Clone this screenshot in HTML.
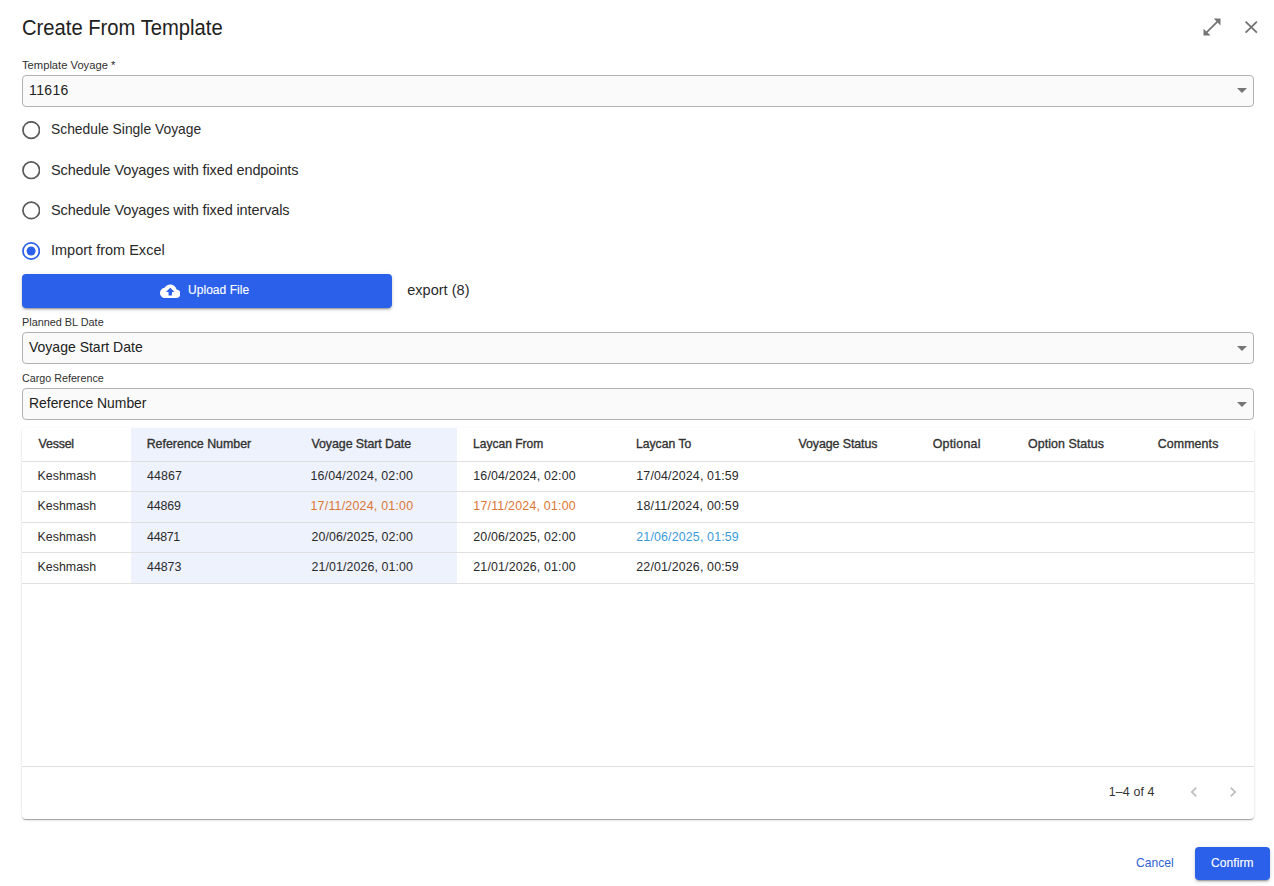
<!DOCTYPE html>
<html><head><meta charset="utf-8">
<style>
*{box-sizing:border-box;margin:0;padding:0}
html,body{width:1274px;height:886px;overflow:hidden;background:#fff;font-family:"Liberation Sans",sans-serif;color:#222}
.a{position:absolute}
.t{position:absolute;white-space:nowrap;line-height:20px}
.sel{position:absolute;left:22px;width:1232px;height:32px;border:1px solid #b2b2b2;border-radius:4px;background:#fafafa}
.hl{position:absolute;left:0;width:1232px;height:1px;background:#e0e0e0}
</style></head><body>
<!-- header icons -->
<svg class="a" style="left:1195px;top:10px" width="70" height="35" viewBox="0 0 70 35">
  <path fill="#757575" d="M18.7 8.5H25.5V15.4Z M8.5 18.7V25.5H15.6Z"/>
  <path stroke="#757575" stroke-width="1.85" d="M23.2 10.8L10.8 23.2"/>
  <path stroke="#757575" stroke-width="1.9" d="M50.6 11.6L61.9 22.6M61.9 11.6L50.6 22.6"/>
</svg>

<div class="sel" style="top:75px"></div>
<div class="sel" style="top:332px"></div>
<div class="sel" style="top:388px"></div>
<svg class="a" style="left:1237px;top:88px" width="10" height="5" viewBox="0 0 10 5"><path fill="#757575" d="M0 0H10L5 5Z"/></svg>
<svg class="a" style="left:1237px;top:346px" width="10" height="5" viewBox="0 0 10 5"><path fill="#757575" d="M0 0H10L5 5Z"/></svg>
<svg class="a" style="left:1237px;top:402px" width="10" height="5" viewBox="0 0 10 5"><path fill="#757575" d="M0 0H10L5 5Z"/></svg>

<!-- radios -->
<svg class="a" style="left:22px;top:121px" width="18" height="140" viewBox="0 0 18 140">
  <g fill="none" stroke="#5a5a5a" stroke-width="1.7">
    <circle cx="9.25" cy="9.1" r="8.3"/>
    <circle cx="9.25" cy="49.2" r="8.3"/>
    <circle cx="9.25" cy="89.4" r="8.3"/>
  </g>
  <circle cx="9.15" cy="130" r="8.15" fill="none" stroke="#2a60ea" stroke-width="1.7"/>
  <circle cx="9.1" cy="130" r="4.5" fill="#2a60ea"/>
</svg>

<!-- upload button -->
<div class="a" style="left:22px;top:274px;width:370px;height:34px;background:#2a60ea;border-radius:4px;box-shadow:0 3px 1px -2px rgba(0,0,0,.2),0 2px 2px 0 rgba(0,0,0,.14),0 1px 5px 0 rgba(0,0,0,.12)"></div>
<svg class="a" style="left:159.7px;top:280.7px" width="20.5" height="20.5" viewBox="0 0 24 24"><path fill="#fff" d="M19.35 10.04C18.67 6.59 15.64 4 12 4 9.11 4 6.6 5.64 5.35 8.04 2.34 8.36 0 10.91 0 14c0 3.31 2.69 6 6 6h13c2.76 0 5-2.24 5-5 0-2.64-2.05-4.78-4.65-4.96zM14 13v4h-4v-4H7l5-5 5 5h-3z"/></svg>

<!-- table paper -->
<div class="a" style="left:22px;top:428px;width:1232px;height:391px;background:#fff;border-radius:4px;box-shadow:0 2px 1px -1px rgba(0,0,0,.2),0 1px 1px 0 rgba(0,0,0,.14),0 1px 3px 0 rgba(0,0,0,.12)">
  <div class="a" style="left:109px;top:0;width:326px;height:155px;background:#eef2fd"></div>
  <div class="hl" style="top:33px"></div>
  <div class="hl" style="top:63px"></div>
  <div class="hl" style="top:94px"></div>
  <div class="hl" style="top:124px"></div>
  <div class="hl" style="top:155px"></div>
  <div class="hl" style="top:338px"></div>
</div>
<svg class="a" style="left:1184px;top:782px" width="20" height="20" viewBox="0 0 24 24"><path fill="#bdbdbd" d="M15.41 7.41 14 6l-6 6 6 6 1.41-1.41L10.83 12z"/></svg>
<svg class="a" style="left:1223px;top:782px" width="20" height="20" viewBox="0 0 24 24"><path fill="#bdbdbd" d="M10 6 8.59 7.41 13.17 12l-4.58 4.59L10 18l6-6z"/></svg>

<!-- confirm button -->
<div class="a" style="left:1195px;top:847px;width:75px;height:33px;background:#2a60ea;border-radius:4px;box-shadow:0 3px 1px -2px rgba(0,0,0,.2),0 2px 2px 0 rgba(0,0,0,.14),0 1px 5px 0 rgba(0,0,0,.12)"></div>

<div id="title" class="t" style="left:22.10px;top:17.80px;font-size:22.00px;color:#212121;letter-spacing:0.000px;transform:scaleX(0.9186);transform-origin:0 0">Create From Template</div>
<div id="l_tv" class="t" style="left:21.50px;top:54.80px;font-size:11.80px;color:#303030;letter-spacing:0.000px;transform:scaleX(0.9490);transform-origin:0 0">Template Voyage *</div>
<div id="v_tv" class="t" style="left:29.10px;top:80.00px;font-size:14.00px;color:#212121;letter-spacing:0.350px">11616</div>
<div id="r1" class="t" style="left:51.00px;top:119.00px;font-size:14.50px;color:#2a2a2a;letter-spacing:0.000px;transform:scaleX(0.9552);transform-origin:0 0">Schedule Single Voyage</div>
<div id="r2" class="t" style="left:51.00px;top:160.01px;font-size:14.50px;color:#2a2a2a;letter-spacing:-0.111px">Schedule Voyages with fixed endpoints</div>
<div id="r3" class="t" style="left:51.00px;top:200.01px;font-size:14.50px;color:#2a2a2a;letter-spacing:-0.111px">Schedule Voyages with fixed intervals</div>
<div id="r4" class="t" style="left:51.00px;top:240.00px;font-size:14.50px;color:#2a2a2a;letter-spacing:0.004px">Import from Excel</div>
<div id="up" class="t" style="left:188.00px;top:279.71px;font-size:12.00px;color:#ffffff;letter-spacing:0.040px;-webkit-text-stroke:0.12px #ffffff">Upload File</div>
<div id="exp" class="t" style="left:407.20px;top:279.80px;font-size:14.50px;color:#2a2a2a;letter-spacing:0.025px">export (8)</div>
<div id="l_bl" class="t" style="left:22.20px;top:312.10px;font-size:11.80px;color:#303030;letter-spacing:0.000px;transform:scaleX(0.9202);transform-origin:0 0">Planned BL Date</div>
<div id="v_bl" class="t" style="left:28.80px;top:336.90px;font-size:14.50px;color:#212121;letter-spacing:0.000px;transform:scaleX(0.9662);transform-origin:0 0">Voyage Start Date</div>
<div id="l_cr" class="t" style="left:22.40px;top:368.10px;font-size:11.80px;color:#303030;letter-spacing:0.000px;transform:scaleX(0.9096);transform-origin:0 0">Cargo Reference</div>
<div id="v_cr" class="t" style="left:29.30px;top:392.80px;font-size:14.50px;color:#212121;letter-spacing:0.000px;transform:scaleX(0.9590);transform-origin:0 0">Reference Number</div>
<div id="h1" class="t" style="left:38.60px;top:434.00px;font-size:12.40px;color:#333333;letter-spacing:-0.200px;-webkit-text-stroke:0.35px #333333">Vessel</div>
<div id="h2" class="t" style="left:146.70px;top:434.00px;font-size:12.40px;color:#333333;letter-spacing:-0.014px;-webkit-text-stroke:0.35px #333333">Reference Number</div>
<div id="h3" class="t" style="left:311.50px;top:434.00px;font-size:12.40px;color:#333333;letter-spacing:-0.063px;-webkit-text-stroke:0.35px #333333">Voyage Start Date</div>
<div id="h4" class="t" style="left:473.20px;top:434.00px;font-size:12.40px;color:#333333;letter-spacing:0.000px;-webkit-text-stroke:0.35px #333333;transform:scaleX(0.9721);transform-origin:0 0">Laycan From</div>
<div id="h5" class="t" style="left:635.80px;top:434.00px;font-size:12.40px;color:#333333;letter-spacing:0.000px;-webkit-text-stroke:0.35px #333333;transform:scaleX(0.9823);transform-origin:0 0">Laycan To</div>
<div id="h6" class="t" style="left:798.50px;top:434.00px;font-size:12.40px;color:#333333;letter-spacing:-0.083px;-webkit-text-stroke:0.35px #333333">Voyage Status</div>
<div id="h7" class="t" style="left:932.70px;top:434.00px;font-size:12.40px;color:#333333;letter-spacing:0.227px;-webkit-text-stroke:0.35px #333333">Optional</div>
<div id="h8" class="t" style="left:1028.00px;top:434.00px;font-size:12.40px;color:#333333;letter-spacing:0.065px;-webkit-text-stroke:0.35px #333333">Option Status</div>
<div id="h9" class="t" style="left:1157.70px;top:434.00px;font-size:12.40px;color:#333333;letter-spacing:0.107px;-webkit-text-stroke:0.35px #333333">Comments</div>
<div id="foot" class="t" style="left:1108.80px;top:782.21px;font-size:12.40px;color:#333333;letter-spacing:0.120px">1–4 of 4</div>
<div id="cancel" class="t" style="left:1135.50px;top:852.90px;font-size:12.40px;color:#2f62d4;letter-spacing:0.000px;transform:scaleX(0.9743);transform-origin:0 0">Cancel</div>
<div id="confirm" class="t" style="left:1211.00px;top:852.90px;font-size:12.00px;color:#ffffff;letter-spacing:0.102px;-webkit-text-stroke:0.12px #ffffff">Confirm</div>
<div id="c00" class="t" style="left:37.60px;top:465.90px;font-size:12.40px;color:#2a2a2a;letter-spacing:0.000px">Keshmash</div>
<div id="c01" class="t" style="left:147.10px;top:465.90px;font-size:12.40px;color:#2a2a2a;letter-spacing:0.100px">44867</div>
<div id="c02" class="t" style="left:310.50px;top:465.90px;font-size:12.40px;color:#2a2a2a;letter-spacing:0.160px">16/04/2024, 02:00</div>
<div id="c03" class="t" style="left:473.30px;top:465.90px;font-size:12.40px;color:#2a2a2a;letter-spacing:0.149px">16/04/2024, 02:00</div>
<div id="c04" class="t" style="left:636.30px;top:465.90px;font-size:12.40px;color:#2a2a2a;letter-spacing:0.157px">17/04/2024, 01:59</div>
<div id="c10" class="t" style="left:37.60px;top:495.80px;font-size:12.40px;color:#2a2a2a;letter-spacing:0.000px">Keshmash</div>
<div id="c11" class="t" style="left:147.10px;top:495.80px;font-size:12.40px;color:#2a2a2a;letter-spacing:-0.150px">44869</div>
<div id="c12" class="t" style="left:310.50px;top:495.80px;font-size:12.40px;color:#dc7634;letter-spacing:0.222px">17/11/2024, 01:00</div>
<div id="c13" class="t" style="left:473.30px;top:495.80px;font-size:12.40px;color:#dc7634;letter-spacing:0.212px">17/11/2024, 01:00</div>
<div id="c14" class="t" style="left:636.30px;top:495.80px;font-size:12.40px;color:#2a2a2a;letter-spacing:0.219px">18/11/2024, 00:59</div>
<div id="c20" class="t" style="left:37.60px;top:526.90px;font-size:12.40px;color:#2a2a2a;letter-spacing:0.000px">Keshmash</div>
<div id="c21" class="t" style="left:147.10px;top:526.90px;font-size:12.40px;color:#2a2a2a;letter-spacing:-0.350px">44871</div>
<div id="c22" class="t" style="left:311.50px;top:526.90px;font-size:12.40px;color:#2a2a2a;letter-spacing:0.097px">20/06/2025, 02:00</div>
<div id="c23" class="t" style="left:473.30px;top:526.90px;font-size:12.40px;color:#2a2a2a;letter-spacing:0.150px">20/06/2025, 02:00</div>
<div id="c24" class="t" style="left:636.30px;top:526.90px;font-size:12.40px;color:#3a9bd9;letter-spacing:0.158px">21/06/2025, 01:59</div>
<div id="c30" class="t" style="left:37.60px;top:557.00px;font-size:12.40px;color:#2a2a2a;letter-spacing:0.000px">Keshmash</div>
<div id="c31" class="t" style="left:147.10px;top:557.00px;font-size:12.40px;color:#2a2a2a;letter-spacing:-0.050px">44873</div>
<div id="c32" class="t" style="left:311.50px;top:557.00px;font-size:12.40px;color:#2a2a2a;letter-spacing:0.097px">21/01/2026, 01:00</div>
<div id="c33" class="t" style="left:473.30px;top:557.00px;font-size:12.40px;color:#2a2a2a;letter-spacing:0.150px">21/01/2026, 01:00</div>
<div id="c34" class="t" style="left:636.30px;top:557.00px;font-size:12.40px;color:#2a2a2a;letter-spacing:0.158px">22/01/2026, 00:59</div>
</body></html>
